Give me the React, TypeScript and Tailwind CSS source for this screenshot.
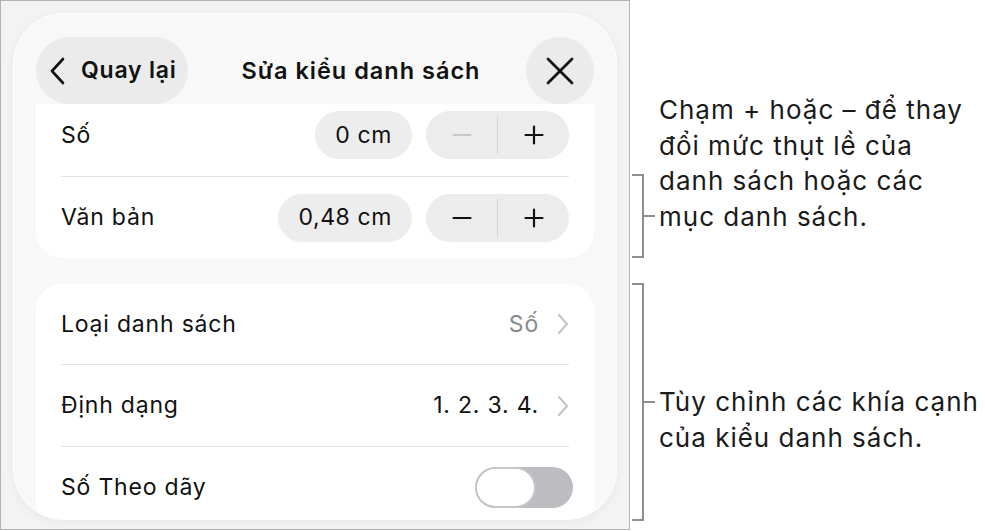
import React from "react";

const font = { fontFamily: "Inter, 'Noto Sans', sans-serif" };

function Minus({ muted }: { muted?: boolean }) {
  return (
    <svg width="20" height="20" viewBox="0 0 20 20">
      <path d="M1.5 10h17" stroke={muted ? "#c8c8c8" : "#111"} strokeWidth="2.2" strokeLinecap="round" />
    </svg>
  );
}

function Plus() {
  return (
    <svg width="20" height="20" viewBox="0 0 20 20">
      <path d="M1.5 10h17M10 1.5v17" stroke="#111" strokeWidth="2.2" strokeLinecap="round" />
    </svg>
  );
}

function Chevron() {
  return (
    <svg width="12" height="22" viewBox="0 0 12 22" className="ml-[18px]">
      <path d="M2 2l8 9-8 9" fill="none" stroke="#c4c4c7" strokeWidth="2" strokeLinecap="round" strokeLinejoin="round" />
    </svg>
  );
}

function Stepper({ minusMuted }: { minusMuted?: boolean }) {
  return (
    <div className="ml-[14px] flex h-[48px] w-[143px] items-center rounded-full bg-[#ececec]">
      <div className="flex flex-1 justify-center">
        <Minus muted={minusMuted} />
      </div>
      <div className="h-[38px] w-px bg-[#d6d6d6]" />
      <div className="flex flex-1 justify-center">
        <Plus />
      </div>
    </div>
  );
}

function ValuePill({ value }: { value: string }) {
  return (
    <div className="flex h-[48px] items-center rounded-full bg-[#ededed] px-[20px] text-[23px] tracking-[0.6px] text-[#111]">
      {value}
    </div>
  );
}

function Bracket({ height, top }: { height: string; top: string }) {
  return (
    <div className={`flex items-center ${height} ${top}`}>
      <div className="h-full w-[12px] border-y-2 border-r-2 border-[#8e8e8e]" />
      <div className="h-[2px] w-[11px] bg-[#8e8e8e]" />
    </div>
  );
}

const label = "flex-1 text-[23px] tracking-[0.8px] text-[#111]";

export default function App() {
  return (
    <div className="flex h-[531px] w-[985px] bg-white" style={font}>
      {/* device frame */}
      <div className="h-[530px] w-[630px] shrink-0 border border-[#b3b3b3] bg-[#f3f3f3] p-[12px]">
        <div className="flex h-[507px] w-[604px] flex-col overflow-hidden rounded-[50px] border-[1.5px] border-white bg-[#f8f8f8] px-[22px] pt-[23px] shadow-[0_2px_10px_rgba(0,0,0,0.05)]">
          {/* header */}
          <div className="flex h-[67px] shrink-0 items-center">
            <div className="flex h-[67px] w-[152px] items-center rounded-full bg-[#ebebeb] pl-[13px]">
              <svg width="18" height="28" viewBox="0 0 18 28">
                <path d="M14 2L3 14l11 12" fill="none" stroke="#111" strokeWidth="2.6" strokeLinecap="round" strokeLinejoin="round" />
              </svg>
              <span className="ml-[14px] text-[23px] font-semibold tracking-[0.8px] text-[#111]">Quay lại</span>
            </div>
            <div className="flex-1 pl-[8px] text-center text-[23.5px] font-semibold tracking-[1px] text-[#111]">
              Sửa kiểu danh sách
            </div>
            <div className="flex h-[67px] w-[68px] items-center justify-center rounded-full bg-[#ebebeb]">
              <svg width="30" height="30" viewBox="0 0 30 30">
                <path d="M3 3l24 24M27 3L3 27" stroke="#111" strokeWidth="2.8" strokeLinecap="round" />
              </svg>
            </div>
          </div>

          {/* indent card */}
          <div className="shrink-0 rounded-b-[26px] bg-white px-[25px]">
            <div className="flex h-[72px] items-center pb-[10px]">
              <span className={label}>Số</span>
              <ValuePill value="0 cm" />
              <Stepper minusMuted />
            </div>
            <div className="h-px bg-[#e3e3e3]" />
            <div className="flex h-[81px] items-center">
              <span className={label}>Văn bản</span>
              <ValuePill value="0,48 cm" />
              <Stepper />
            </div>
          </div>

          {/* list style card */}
          <div className="mt-[26px] shrink-0 rounded-t-[26px] bg-white px-[25px]">
            <div className="flex h-[80px] items-center">
              <span className={label}>Loại danh sách</span>
              <span className="text-[23px] tracking-[0.8px] text-[#8a8a8e]">Số</span>
              <Chevron />
            </div>
            <div className="h-px bg-[#e3e3e3]" />
            <div className="flex h-[81px] items-center">
              <span className={label}>Định dạng</span>
              <span className="text-[23px] tracking-[0.8px] text-[#111]">1. 2. 3. 4.</span>
              <Chevron />
            </div>
            <div className="h-px bg-[#e3e3e3]" />
            <div className="flex h-[81px] items-center">
              <span className={label}>Số Theo dãy</span>
              <div className="-mr-[4px] flex h-[41px] w-[98px] items-center rounded-full bg-[#bdbdc1]">
                <div className="h-[41px] w-[61px] rounded-full border-[2px] border-[#c6c6c6] bg-white" />
              </div>
            </div>
          </div>
        </div>
      </div>

      {/* annotations */}
      <div className="ml-[2px] flex flex-col">
        <Bracket height="h-[84px]" top="mt-[174px]" />
        <Bracket height="h-[238px]" top="mt-[25px]" />
      </div>
      <div className="ml-[4px] flex flex-col whitespace-nowrap text-[26px] leading-[35.5px] tracking-[1px] text-[#1a1a1a]">
        <p className="mt-[92px]">
          Chạm + hoặc – để thay
          <br />
          đổi mức thụt lề của
          <br />
          danh sách hoặc các
          <br />
          mục danh sách.
        </p>
        <p className="mt-[150px]">
          Tùy chỉnh các khía cạnh
          <br />
          của kiểu danh sách.
        </p>
      </div>
    </div>
  );
}
